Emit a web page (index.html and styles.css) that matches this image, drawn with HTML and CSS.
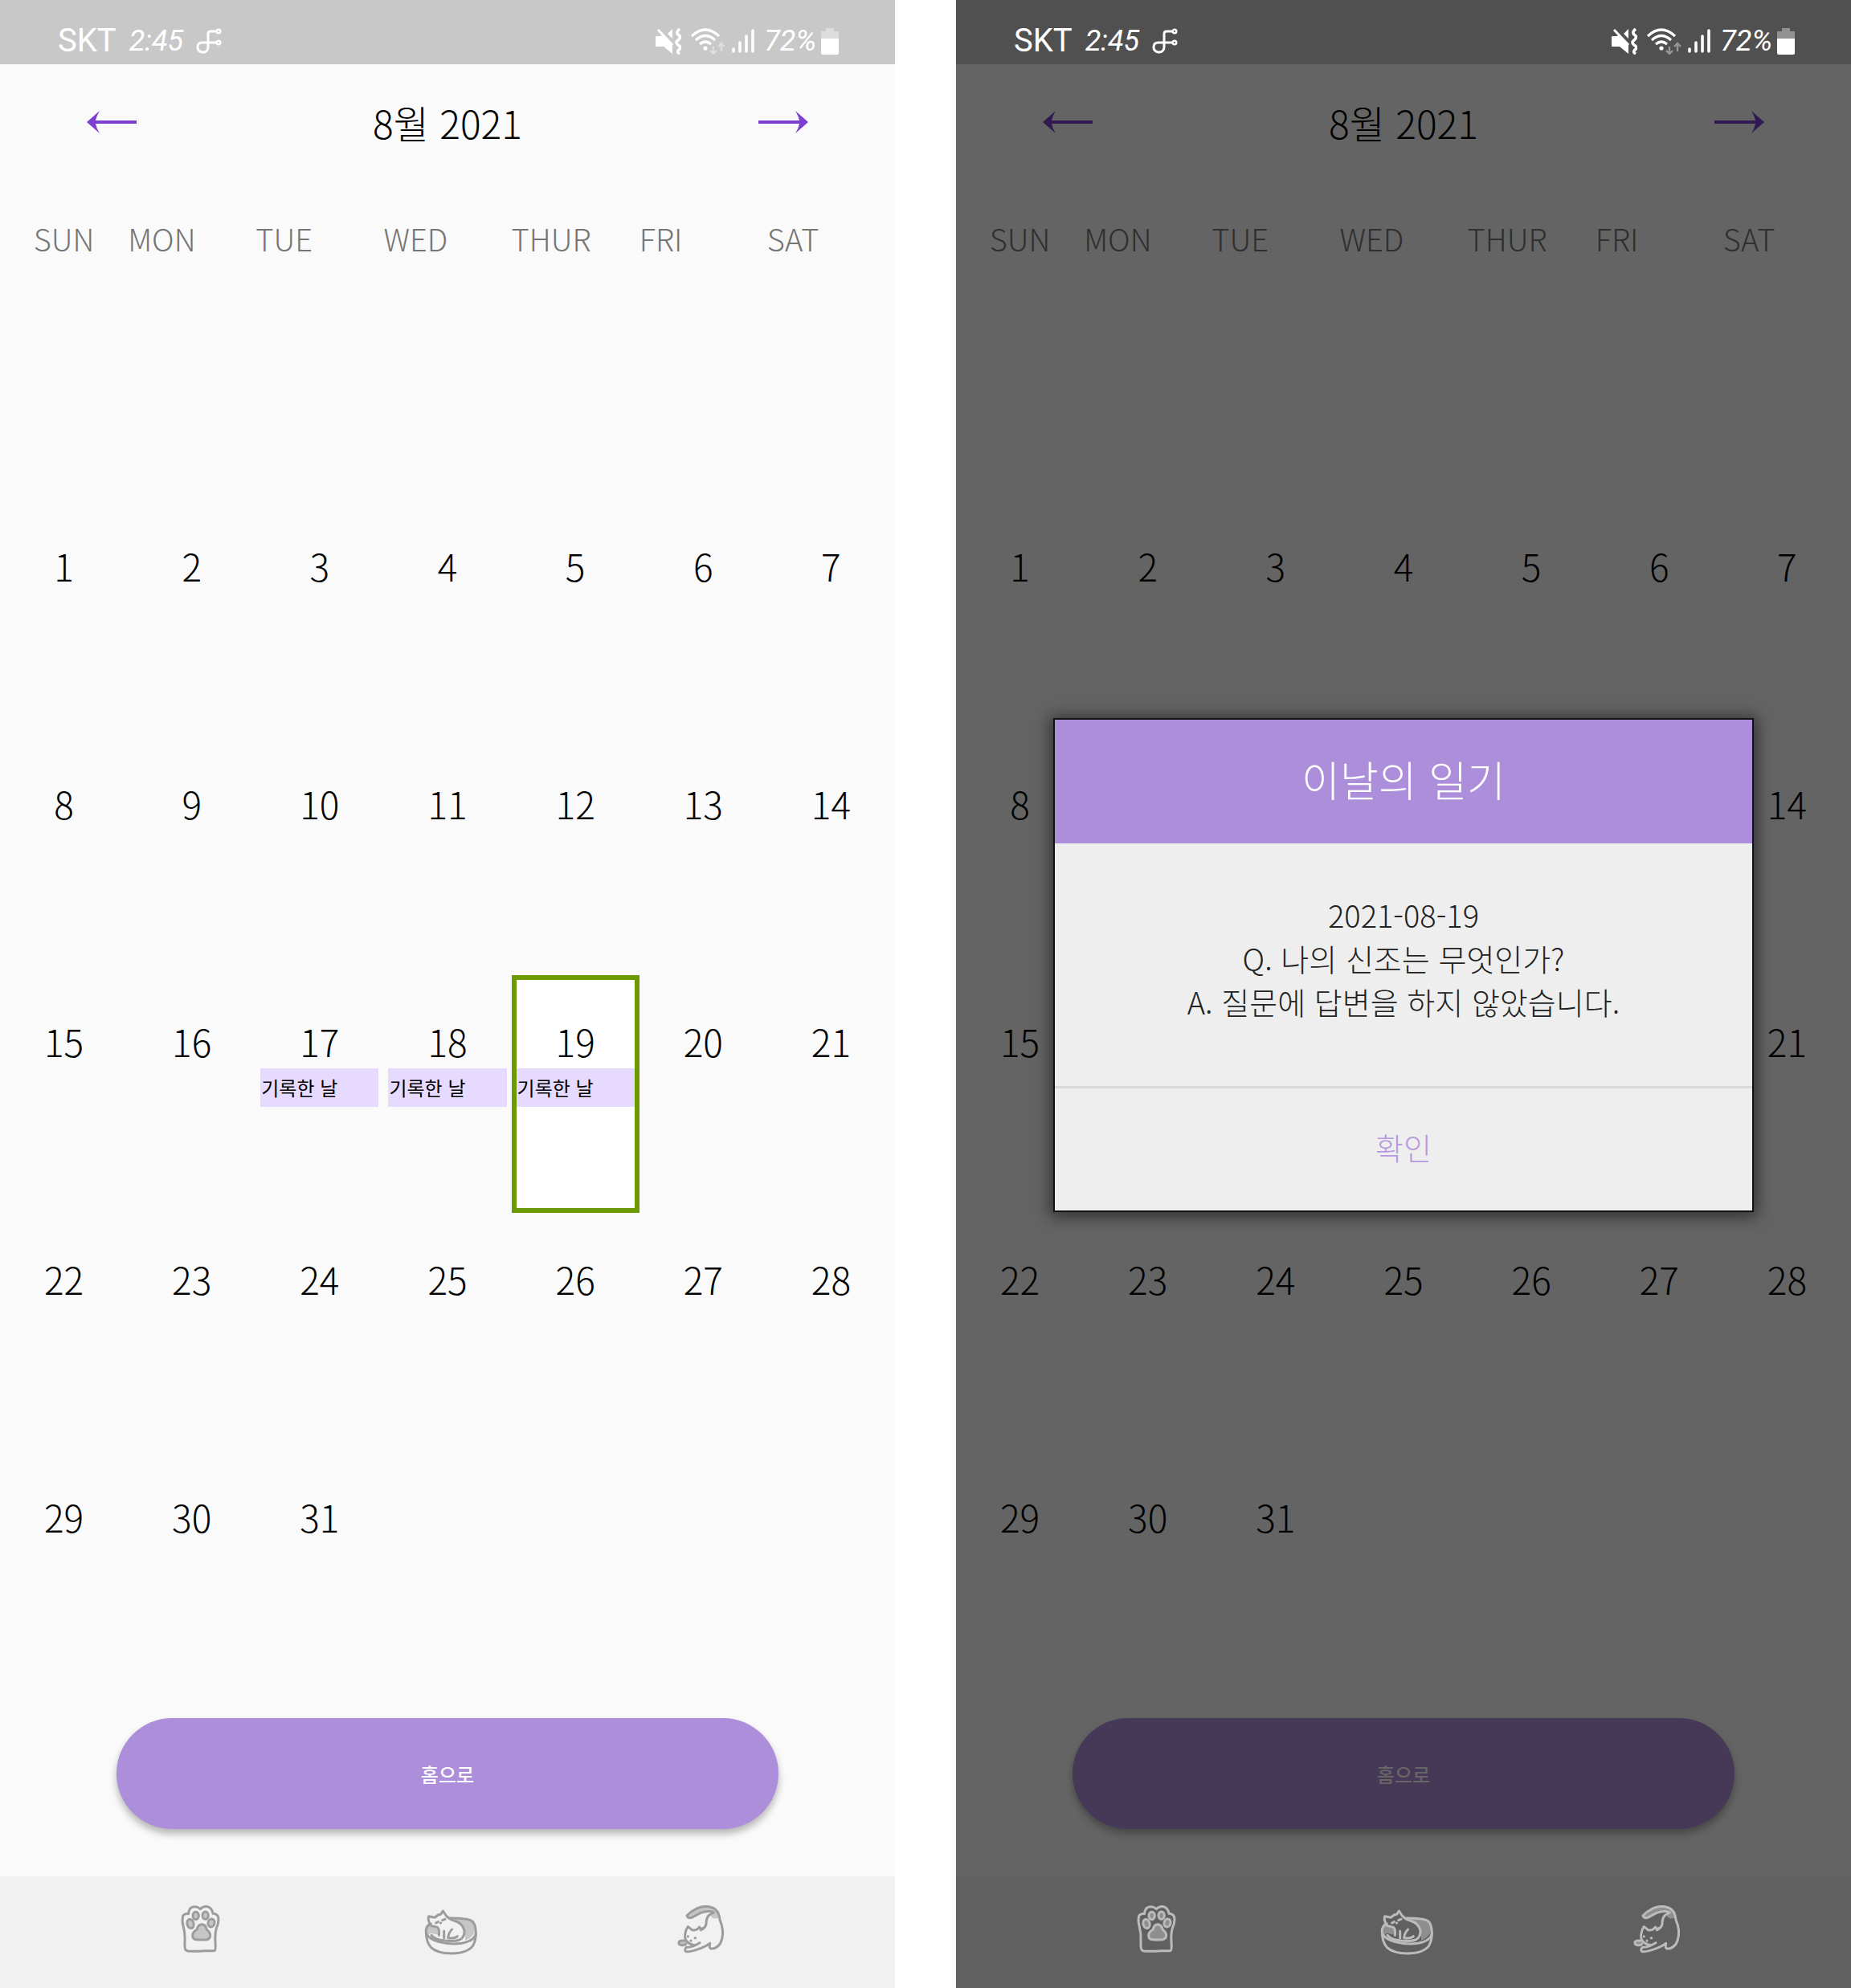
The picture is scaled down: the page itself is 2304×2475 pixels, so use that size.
FILE: index.html
```html
<!DOCTYPE html>
<html lang="ko">
<head>
<meta charset="utf-8">
<meta name="viewport" content="width=device-width, initial-scale=1">
<title>8월 2021</title>
<link rel="stylesheet" href="styles.css">
</head>
<body>
<svg class="sprite" aria-hidden="true">
  <symbol id="i-link" viewBox="0 0 32 32">
    <g fill="none" stroke="currentColor" stroke-width="3"><path d="M26 4H18q-3 0-3 3V24a6 6 0 0 1-7 6a6 6 0 0 1-6-6.500q0-5.500 6-5.500H26"/><circle cx="28" cy="4" r="2.300" stroke-width="2.400"/><circle cx="28" cy="18" r="2.300" stroke-width="2.400"/></g>
  </symbol>
  <symbol id="i-mute" viewBox="0 0 32 33">
    <path fill="currentColor" d="M1 10h5l3-1L21 21v11l-11-9H1q-1 0-1-1V11q0-1 1-1zM21 1v12l-6-6z"/>
    <path d="M3 2l18 19" fill="none" stroke="currentColor" stroke-width="3"/>
    <path d="M30 1q-5 4-2 7q5 3 0 7q-4 3 0 6q5 3 1 6q-3 3 1 5" fill="none" stroke="currentColor" stroke-width="3.600"/>
  </symbol>
  <symbol id="i-wifi" viewBox="0 0 43 33">
    <g fill="none" stroke="currentColor" stroke-width="3.200"><path d="M1 10Q18-6 35 10"/><path d="M6 15q12-11 24 0"/><path d="M11 20q7-6 14 0"/></g>
    <circle cx="18" cy="25" r="2.600" fill="currentColor"/>
    <path d="M28 23v9m-4-4 4 4 4-4M38 29v-10m-4 4 4-4 4 4" fill="none" stroke="currentColor" stroke-width="2.400" opacity=".4"/>
  </symbol>
  <symbol id="i-signal" viewBox="0 0 28 30">
    <path d="M2 25v3M10 17v11M18 9v19M26 2v26" fill="none" stroke="currentColor" stroke-width="3.600" stroke-linecap="round"/>
  </symbol>
  <symbol id="i-battery" viewBox="0 0 22 33">
    <path d="M6 0h10v4h6v9H0V4h6z" fill="currentColor" opacity=".38"/><path d="M0 13h22v18q0 2-2 2H2q-2 0-2-2z" fill="currentColor"/>
  </symbol>
  <symbol id="i-arrow" viewBox="0 0 62 28">
    <path d="M0 14 16 0q-4 7-5 12H62v4H11q1 6 5 12z" fill="currentColor"/>
  </symbol>
  <symbol id="i-paw" viewBox="66 118 216 216">
    <g class="line">
      <path d="M118 291Q113 290 114 260Q116 230 108 200Q103 185 107 164Q113 154 128 156Q128 136 142 131Q158 126 172 138Q186 124 204 131Q216 137 219 155Q240 156 240 177Q240 192 232 210Q226 230 228 260Q230 290 226 293Q222 295 190 294Q150 297 126 295Q120 294 118 291Z"/>
      <ellipse class="tint" cx="155" cy="163" rx="11" ry="14"/><ellipse class="tint" cx="191" cy="162" rx="11" ry="14"/>
      <ellipse class="tint" cx="135" cy="193" rx="12" ry="17" transform="rotate(-15 135 193)"/><ellipse class="tint" cx="213" cy="190" rx="12" ry="15" transform="rotate(15 213 190)"/>
      <path class="tint" d="M177 195Q163 196 160 214Q143 224 143 237Q143 251 158 252Q178 254 196 252Q210 249 209 234Q208 224 196 215Q192 196 177 195Z"/>
    </g>
  </symbol>
  <symbol id="i-bed" viewBox="70 118 216 216">
    <g class="line">
      <path class="tint" stroke-width="0" d="M190 174Q255 170 269 200Q274 238 232 256Q236 210 190 174ZM102 192Q84 202 85 240L104 228L132 234Q136 208 102 196Z"/>
      <path d="M104 193Q84 200 86 226Q87 262 104 281Q126 303 180 304Q240 303 261 275Q272 255 272 228Q271 190 256 182Q238 172 176 172"/>
      <path d="M272 230Q268 256 220 266Q176 272 132 260Q100 250 87 232"/>
      <path d="M134 236Q138 218 128 206L104 200Q91 178 96 165L119 170Q130 158 141 158L149 145L161 163Q172 176 190 181Q222 190 229 218Q230 244 212 253Q190 262 140 254Q118 250 106 236"/>
      <path d="M153 220V246M183 214Q170 226 168 246Q192 250 203 240"/>
      <path d="M123 190l8-4M147 180l10-4M140 190h1"/>
    </g>
  </symbol>
  <symbol id="i-cat" viewBox="75 118 216 216">
    <g class="line">
      <path class="tint" stroke-width="0" d="M132 162Q160 132 206 129Q248 132 254 168Q232 182 220 162Q226 154 232 150Q190 142 150 170Q134 170 132 162Z"/>
      <path d="M184 216Q200 210 204 194Q204 170 216 160L232 151Q216 142 184 152Q164 162 150 170Q134 174 132 163Q144 148 162 140Q184 126 214 129Q246 134 252 162Q254 180 262 198Q272 236 256 268Q240 288 222 286Q214 284 218 266Q200 280 168 290Q144 298 130 297Q120 292 130 281Q150 282 180 264"/>
      <path d="M160 273Q130 268 125 246Q124 220 136 204L151 216Q164 218 170 214L179 205L185 216L190 210"/>
      <path class="tint" d="M124 257Q106 254 102 262Q100 272 112 273Q126 274 128 268"/>
      <path d="M136 240v1M162 246h2M147 256v1"/>
    </g>
  </symbol>
</svg>

<div class="screens">
  <section class="screen">
    <header class="status">
      <span class="carrier">SKT</span><span class="clock">2:45</span><svg class="s-link"><use href="#i-link"/></svg>
      <span class="status-right"><svg class="s-mute"><use href="#i-mute"/></svg><svg class="s-wifi"><use href="#i-wifi"/></svg><svg class="s-signal"><use href="#i-signal"/></svg><span class="percent">72%</span><svg class="s-battery"><use href="#i-battery"/></svg></span>
    </header>
    <main class="content">
      <div class="month">
        <button class="arrow" aria-label="이전 달"><svg><use href="#i-arrow"/></svg></button>
        <h1>8월 2021</h1>
        <button class="arrow next" aria-label="다음 달"><svg><use href="#i-arrow"/></svg></button>
      </div>
      <table class="calendar">
        <thead><tr><th>SUN</th><th>MON</th><th>TUE</th><th>WED</th><th>THUR</th><th>FRI</th><th>SAT</th></tr></thead>
        <tbody>
          <tr><td></td><td></td><td></td><td></td><td></td><td></td><td></td></tr>
          <tr><td><div class="day">1</div></td><td><div class="day">2</div></td><td><div class="day">3</div></td><td><div class="day">4</div></td><td><div class="day">5</div></td><td><div class="day">6</div></td><td><div class="day">7</div></td></tr>
          <tr><td><div class="day">8</div></td><td><div class="day">9</div></td><td><div class="day">10</div></td><td><div class="day">11</div></td><td><div class="day">12</div></td><td><div class="day">13</div></td><td><div class="day">14</div></td></tr>
          <tr><td><div class="day">15</div></td><td><div class="day">16</div></td><td><div class="day">17<span class="tag">기록한 날</span></div></td><td><div class="day">18<span class="tag">기록한 날</span></div></td><td><div class="day selected">19<span class="tag">기록한 날</span></div></td><td><div class="day">20</div></td><td><div class="day">21</div></td></tr>
          <tr><td><div class="day">22</div></td><td><div class="day">23</div></td><td><div class="day">24</div></td><td><div class="day">25</div></td><td><div class="day">26</div></td><td><div class="day">27</div></td><td><div class="day">28</div></td></tr>
          <tr><td><div class="day">29</div></td><td><div class="day">30</div></td><td><div class="day">31</div></td><td></td><td></td><td></td><td></td></tr>
        </tbody>
      </table>
      <button class="home">홈으로</button>
    </main>
    <nav class="tabs">
      <a href="#paw" aria-label="발바닥"><svg><use href="#i-paw"/></svg></a>
      <a href="#bed" aria-label="고양이 방석"><svg><use href="#i-bed"/></svg></a>
      <a href="#cat" aria-label="고양이"><svg><use href="#i-cat"/></svg></a>
    </nav>
  </section>

  <section class="screen dimmed">
    <header class="status">
      <span class="carrier">SKT</span><span class="clock">2:45</span><svg class="s-link"><use href="#i-link"/></svg>
      <span class="status-right"><svg class="s-mute"><use href="#i-mute"/></svg><svg class="s-wifi"><use href="#i-wifi"/></svg><svg class="s-signal"><use href="#i-signal"/></svg><span class="percent">72%</span><svg class="s-battery"><use href="#i-battery"/></svg></span>
    </header>
    <main class="content">
      <div class="month">
        <button class="arrow" aria-label="이전 달"><svg><use href="#i-arrow"/></svg></button>
        <h1>8월 2021</h1>
        <button class="arrow next" aria-label="다음 달"><svg><use href="#i-arrow"/></svg></button>
      </div>
      <table class="calendar">
        <thead><tr><th>SUN</th><th>MON</th><th>TUE</th><th>WED</th><th>THUR</th><th>FRI</th><th>SAT</th></tr></thead>
        <tbody>
          <tr><td></td><td></td><td></td><td></td><td></td><td></td><td></td></tr>
          <tr><td><div class="day">1</div></td><td><div class="day">2</div></td><td><div class="day">3</div></td><td><div class="day">4</div></td><td><div class="day">5</div></td><td><div class="day">6</div></td><td><div class="day">7</div></td></tr>
          <tr><td><div class="day">8</div></td><td></td><td></td><td></td><td></td><td></td><td><div class="day">14</div></td></tr>
          <tr><td><div class="day">15</div></td><td></td><td></td><td></td><td></td><td></td><td><div class="day">21</div></td></tr>
          <tr><td><div class="day">22</div></td><td><div class="day">23</div></td><td><div class="day">24</div></td><td><div class="day">25</div></td><td><div class="day">26</div></td><td><div class="day">27</div></td><td><div class="day">28</div></td></tr>
          <tr><td><div class="day">29</div></td><td><div class="day">30</div></td><td><div class="day">31</div></td><td></td><td></td><td></td><td></td></tr>
        </tbody>
      </table>
      <button class="home">홈으로</button>
    </main>
    <nav class="tabs">
      <a href="#paw" aria-label="발바닥"><svg><use href="#i-paw"/></svg></a>
      <a href="#bed" aria-label="고양이 방석"><svg><use href="#i-bed"/></svg></a>
      <a href="#cat" aria-label="고양이"><svg><use href="#i-cat"/></svg></a>
    </nav>
    <div class="overlay">
      <div class="dialog" role="dialog" aria-labelledby="diary-title">
        <h2 id="diary-title">이날의 일기</h2>
        <div class="entry">
          <p>2021-08-19</p>
          <p>Q. 나의 신조는 무엇인가?</p>
          <p>A. 질문에 답변을 하지 않았습니다.</p>
        </div>
        <button class="confirm">확인</button>
      </div>
    </div>
  </section>
</div>
</body>
</html>
```

FILE: styles.css
```css
* { box-sizing: border-box; }
body {
  margin: 0;
  background: #fff;
  color: #000;
  font-family: "Noto Sans CJK KR", sans-serif;
  font-weight: 300;
}
button { border: 0; padding: 0; background: none; font: inherit; color: inherit; }
h1, h2, p { margin: 0; font-weight: 300; }
svg { display: block; flex: none; }
.sprite { position: absolute; width: 0; height: 0; }

.screens { display: flex; gap: 76px; min-height: 100vh; }
.screen { position: relative; flex: 1; min-width: 0; display: flex; flex-direction: column; background: #fafafa; }

.status {
  display: flex;
  align-items: center;
  height: 80px;
  padding: 22px 70px 0 72px;
  background: #c8c8c8;
  color: #fff;
  font-family: Roboto, sans-serif;
  font-weight: 400;
}
.carrier { font-size: 40px; line-height: 44px; }
.clock, .percent { font-size: 36px; font-style: italic; line-height: 40px; }
.clock { margin: 0 16px; }
.status-right { display: flex; align-items: center; margin-left: auto; }
.percent { margin: 0 6px 0 12px; }
.s-link { width: 32px; height: 32px; }
.s-mute { width: 32px; height: 33px; }
.s-wifi { width: 43px; height: 33px; margin: 0 8px 0 12px; }
.s-signal { width: 28px; height: 30px; }
.s-battery { width: 22px; height: 33px; }

.content { flex: 1; }
.month { display: flex; align-items: center; justify-content: space-between; height: 150px; padding: 0 108px 6px; }
.month h1 { font-size: 48px; line-height: 56px; }
.arrow { color: #7c3fd0; }
.arrow svg { width: 62px; height: 28px; }
.next svg { transform: scaleX(-1); }

.calendar { width: 100%; table-layout: fixed; border-collapse: collapse; }
.calendar th {
  height: 96px;
  padding: 0;
  color: #757575;
  font-size: 38px;
  font-weight: 300;
  line-height: 58px;
  text-align: left;
  vertical-align: bottom;
}
.calendar th:first-child { text-align: center; }
.calendar td { height: 296px; padding: 0; vertical-align: top; }
.day { height: 296px; padding-top: 48px; border: 6px solid transparent; font-size: 46px; line-height: 56px; text-align: center; }
.selected { background: #fff; border-color: #6c9a00; }
.tag { display: block; margin-top: 6px; padding-left: 1px; background: #e7daff; font-size: 24px; font-weight: 400; line-height: 48px; text-align: left; }

.home {
  display: block;
  width: 74%;
  height: 138px;
  margin: 37px auto 59px;
  border-radius: 69px;
  background: #ad8eda;
  box-shadow: 0 6px 10px rgba(0, 0, 0, .28);
  color: #fff;
  font-size: 24px;
  font-weight: 500;
}

.tabs { display: grid; grid-template-columns: repeat(3, 1fr); align-items: center; height: 139px; padding: 0 86px 0 94px; background: #f1f1f1; color: #9c9c9c; }
.tabs a { display: flex; justify-content: center; color: inherit; }
.tabs svg { width: 72px; height: 72px; }
.line { fill: none; stroke: currentColor; stroke-width: 9; stroke-linecap: round; stroke-linejoin: round; }
.tint { fill: currentColor; fill-opacity: .5; }

/* The second screen is shaded by its colours, so status and tab icons stay bright. */
.dimmed { background: #646464; }
.dimmed .status { background: #505050; }
.dimmed .arrow { color: #321953; }
.dimmed .calendar th { color: #2f2f2f; }
.dimmed .home { background: #453957; color: #666; }
.dimmed .tabs { background: #606060; color: #bbb; }

.overlay { position: absolute; inset: 0; display: flex; align-items: center; justify-content: center; padding-bottom: 73px; }
.dialog { width: 78%; background: #eee; text-align: center; box-shadow: 0 0 0 2px #111, 0 2px 18px 6px rgba(0, 0, 0, .5); }
.dialog h2 { padding-bottom: 6px; background: #ad8eda; color: #fff; font-size: 52px; line-height: 148px; }
.entry { padding: 62px 0 78px; border-bottom: 3px solid #d9d9d9; color: #222; font-size: 38px; line-height: 54px; }
.confirm { display: block; width: 100%; padding-bottom: 6px; color: #b598e0; font-size: 38px; line-height: 146px; }
```
